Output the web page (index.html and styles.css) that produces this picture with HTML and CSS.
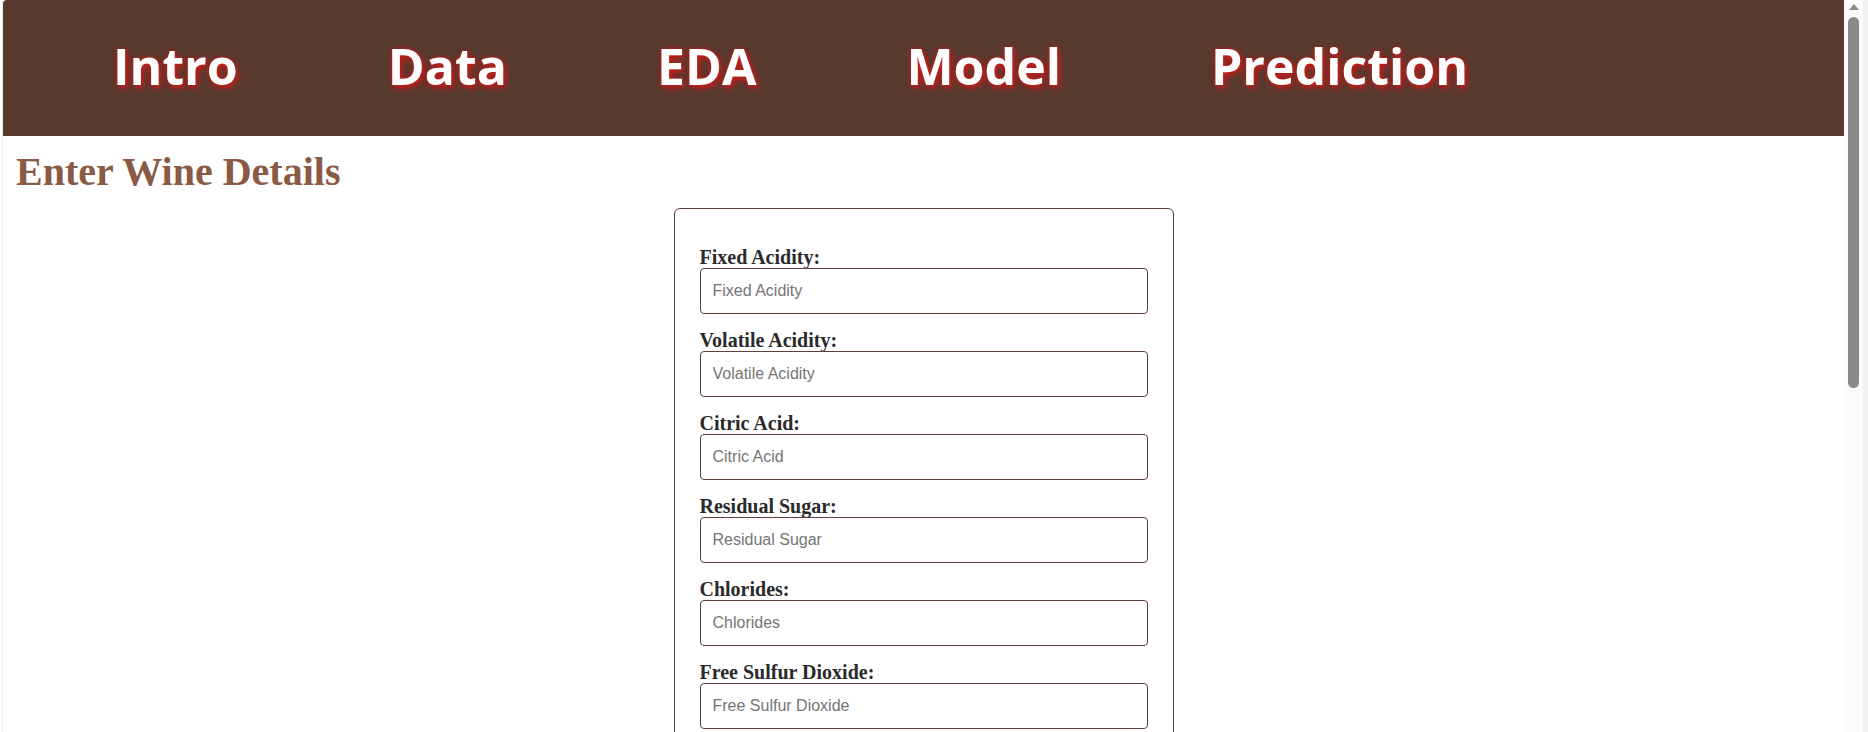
FILE: index.html
```html
<!DOCTYPE html>
<html lang="en">
<head>
<meta charset="utf-8">
<title>Wine Quality Prediction</title>
<link rel="stylesheet" href="styles.css">
</head>
<body>
<div class="page">
  <header class="topbar">
    <ul class="nav-list">
      <li class="nav-item"><a class="nav-link" href="#intro">Intro</a></li>
      <li class="nav-item"><a class="nav-link" href="#data">Data</a></li>
      <li class="nav-item"><a class="nav-link" href="#eda">EDA</a></li>
      <li class="nav-item"><a class="nav-link" href="#model">Model</a></li>
      <li class="nav-item"><a class="nav-link" href="#prediction">Prediction</a></li>
    </ul>
  </header>
  <main class="content">
    <h1 class="title">Enter Wine Details</h1>
    <form class="wine-form">
      <label class="field-label" for="fa">Fixed Acidity:</label>
      <input class="field-input" id="fa" type="text" placeholder="Fixed Acidity">
      <label class="field-label" for="va">Volatile Acidity:</label>
      <input class="field-input" id="va" type="text" placeholder="Volatile Acidity">
      <label class="field-label" for="ca">Citric Acid:</label>
      <input class="field-input" id="ca" type="text" placeholder="Citric Acid">
      <label class="field-label" for="rs">Residual Sugar:</label>
      <input class="field-input" id="rs" type="text" placeholder="Residual Sugar">
      <label class="field-label" for="ch">Chlorides:</label>
      <input class="field-input" id="ch" type="text" placeholder="Chlorides">
      <label class="field-label" for="fsd">Free Sulfur Dioxide:</label>
      <input class="field-input" id="fsd" type="text" placeholder="Free Sulfur Dioxide">
    </form>
  </main>
</div>
<div class="scrollbar" aria-hidden="true">
  <div class="scroll-arrow"></div>
  <div class="scroll-thumb"></div>
</div>
</body>
</html>
```

FILE: styles.css
```css
html {
  background: #ffffff;
}

body {
  margin: 0;
  background: #ffffff;
  font-family: "Liberation Serif", "Times New Roman", serif;
}

.page {
  margin-left: 2px;
  margin-right: 24px;
  border-left: 1px solid #ececec;
  padding-bottom: 40px;
}

.topbar {
  height: 136px;
  box-sizing: border-box;
  padding-bottom: 4px;
  background: #583a2f;
  border-top-left-radius: 4px;
  display: flex;
  align-items: center;
}

.nav-list {
  display: flex;
  margin: 0;
  padding: 0 0 0 35px;
  list-style: none;
}

.nav-item {
  margin: 0 75px;
}

.nav-link {
  color: #ffffff;
  text-decoration: none;
  font-family: "Open Sans", "DejaVu Sans", sans-serif;
  font-weight: 700;
  font-size: 50px;
  line-height: 1;
  text-shadow: 2px 3px 6px #cc1a1a, 0 0 4px #c01616;
}

.content {
  display: flex;
  flex-direction: column;
}

.title {
  margin: 13px 0 13px 13px;
  font-size: 40px;
  line-height: 46px;
  font-weight: 700;
  color: #8b5a44;
}

.wine-form {
  width: 500px;
  box-sizing: border-box;
  margin: 0 auto;
  padding: 37px 25px 25px;
  border: 1px solid #5d4037;
  border-radius: 6px;
  display: flex;
  flex-direction: column;
}

.field-label {
  display: block;
  font-family: "Liberation Serif", "Times New Roman", serif;
  font-weight: 700;
  font-size: 20px;
  line-height: 22px;
  color: #2a2a2a;
}

.field-input {
  display: block;
  width: 100%;
  height: 46px;
  box-sizing: border-box;
  margin: 0 0 15px;
  padding: 0 12px;
  border: 1px solid #5d4037;
  border-radius: 4px;
  font-family: "Liberation Sans", Arial, sans-serif;
  font-size: 16px;
  color: #333333;
  background: #ffffff;
  outline: none;
}

.field-input::placeholder {
  color: #757575;
}

.scrollbar {
  position: fixed;
  top: 0;
  right: 0;
  width: 19px;
  height: 100vh;
  background: #fbfbfb;
  border-right: 5px solid #f1f1f1;
  display: flex;
  flex-direction: column;
  align-items: flex-start;
}

.scroll-arrow {
  margin: 4px 0 0 5px;
  width: 0;
  height: 0;
  border-left: 5px solid transparent;
  border-right: 5px solid transparent;
  border-bottom: 6px solid #8a8a8a;
}

.scroll-thumb {
  margin: 7px 0 0 4px;
  width: 11px;
  height: 371px;
  border-radius: 6px;
  background: #8a8a8a;
}
```
